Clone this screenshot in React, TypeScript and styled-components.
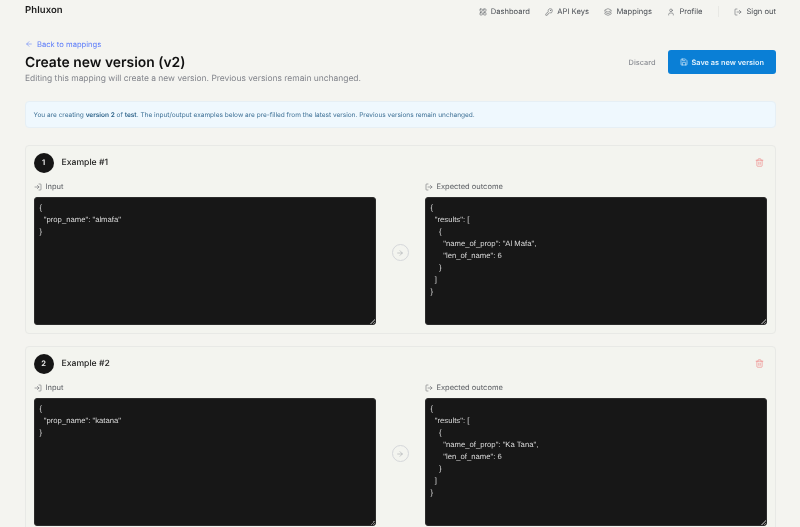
import * as React from "react";
import styled, { createGlobalStyle } from "styled-components";
import {
	ArrowLeft,
	ArrowRight,
	KeyRound,
	Layers,
	LayoutGrid,
	LogIn,
	LogOut,
	Save,
	Trash2,
	User,
} from "lucide-react";

const GlobalStyle = createGlobalStyle`
	html, body {
		margin: 0;
		height: 527px;
		overflow: hidden;
		background: #f4f4f0;
	}
	body {
		font-family: "Inter", "Liberation Sans", sans-serif;
		text-rendering: geometricPrecision;
	}
	textarea, button {
		text-rendering: geometricPrecision;
	}
`;

const Page = styled.div`
	width: 800px;
	height: 527px;
	overflow: hidden;
	background: #f4f4f0;
	color: #111;
	filter: blur(0.35px);
`;

const TopBar = styled.header`
	display: flex;
	align-items: center;
	justify-content: space-between;
	height: 21px;
	padding: 0 24px 0 25px;
`;

const Logo = styled.div`
	font-size: 9.5px;
	font-weight: 600;
	letter-spacing: 0.1px;
	color: #1a1a1a;
`;

const Nav = styled.nav`
	display: flex;
	align-items: center;
	gap: 15.5px;
	margin-top: 2px;
`;

const NavItem = styled.a`
	display: flex;
	align-items: center;
	gap: 4px;
	font-size: 7.6px;
	color: #4b4f55;
	white-space: nowrap;
`;

const NavDivider = styled.span`
	width: 1px;
	height: 11px;
	background: #e8e8e4;
`;

const Content = styled.main`
	padding: 18px 24px 0 25px;
`;

const Header = styled.div`
	display: flex;
	align-items: flex-start;
	justify-content: space-between;
`;

const BackLink = styled.a`
	display: flex;
	align-items: center;
	gap: 4px;
	height: 10px;
	font-size: 7.6px;
	color: #5c7cfa;
`;

const Title = styled.h1`
	margin: 5px 0 0;
	font-size: 13.9px;
	line-height: 19px;
	font-weight: 600;
	color: #111;
`;

const Subtitle = styled.p`
	margin: 1px 0 0;
	font-size: 8.45px;
	line-height: 11px;
	color: #80838a;
`;

const Actions = styled.div`
	display: flex;
	align-items: center;
	gap: 12px;
	margin-top: 11px;
`;

const DiscardButton = styled.button`
	padding: 0;
	border: 0;
	background: none;
	font: inherit;
	font-size: 7.4px;
	font-weight: 500;
	color: #8a8d93;
`;

const SaveButton = styled.button`
	display: flex;
	align-items: center;
	gap: 4px;
	height: 24px;
	padding: 0 12px;
	border: 0;
	border-radius: 3px;
	background: #0a7fd6;
	color: #dff0fc;
	font: inherit;
	font-size: 7.35px;
	font-weight: 600;
	white-space: nowrap;
`;

const Notice = styled.div`
	display: flex;
	align-items: center;
	height: 27px;
	margin-top: 16px;
	padding: 0 7.5px;
	box-sizing: border-box;
	border: 1px solid #e6eff5;
	border-radius: 4px;
	background: #eff8fe;
	font-size: 6.52px;
	color: #3f7196;

	b {
		font-weight: 600;
		color: #2c6289;
	}
`;

const Cards = styled.div`
	display: flex;
	flex-direction: column;
	gap: 12px;
	margin-top: 16.5px;
`;

const Card = styled.section`
	box-sizing: border-box;
	height: 189px;
	flex: none;
	padding: 7px 8.5px 7px 7.5px;
	border: 1px solid #e8e9e6;
	border-radius: 4px;
	background: #f3f4ef;
`;

const CardHead = styled.div`
	display: flex;
	align-items: center;
	justify-content: space-between;
	height: 20px;
`;

const CardTitle = styled.div`
	display: flex;
	align-items: center;
	gap: 8px;
	font-size: 8.65px;
	font-weight: 500;
	color: #1c1c1c;
`;

const StepNumber = styled.span`
	display: flex;
	align-items: center;
	justify-content: center;
	width: 20px;
	height: 20px;
	border-radius: 50%;
	background: #151515;
	color: #f2f2f2;
	font-size: 7.6px;
	font-weight: 600;
`;

const DeleteIcon = styled(Trash2)`
	margin-right: 3px;
	color: #f08080;
`;

const Columns = styled.div`
	display: grid;
	grid-template-columns: 342px 1fr 342px;
	margin-top: 8px;
`;

const Field = styled.div`
	display: flex;
	flex-direction: column;
	gap: 4px;
`;

const FieldLabel = styled.label`
	display: flex;
	align-items: center;
	gap: 4px;
	height: 12px;
	font-size: 7.5px;
	color: #5a5d62;
`;

const CodeArea = styled.textarea`
	display: block;
	box-sizing: border-box;
	width: 342px;
	height: 128px;
	padding: 4px 5px;
	border: 1px solid #2b2b2b;
	border-radius: 3px;
	outline: none;
	background: #171717;
	color: #dcdcdc;
	font-family: "Liberation Sans", "Inter", sans-serif;
	font-size: 7.7px;
	line-height: 12px;
	overflow: hidden;

	&::-webkit-resizer {
		background: linear-gradient(
				135deg,
				transparent 50%,
				#777 50%,
				#777 62%,
				transparent 62%,
				transparent 75%,
				#777 75%,
				#777 87%,
				transparent 87%
			)
			no-repeat right bottom / 5px 5px;
	}
`;

const ArrowColumn = styled.div`
	display: flex;
	align-items: center;
	justify-content: center;
`;

const ArrowCircle = styled.span`
	display: flex;
	align-items: center;
	justify-content: center;
	box-sizing: border-box;
	width: 17px;
	height: 17px;
	border: 1px solid #d5d7da;
	border-radius: 50%;
	color: #9ea2a8;
`;

const NAV_ITEMS = [
	{ label: "Dashboard", icon: LayoutGrid },
	{ label: "API Keys", icon: KeyRound },
	{ label: "Mappings", icon: Layers },
	{ label: "Profile", icon: User },
];

const EXAMPLES = [
	{ prop: "almafa", name: "Al Mafa" },
	{ prop: "katana", name: "Ka Tana" },
];

const inputJson = (prop: string) => `{\n  "prop_name": "${prop}"\n}`;

const outputJson = (name: string) =>
	`{\n  "results": [\n    {\n      "name_of_prop": "${name}",\n      "len_of_name": 6\n    }\n  ]\n}`;

const App = (): JSX.Element => (
	<Page>
		<GlobalStyle />
		<TopBar>
			<Logo>Phluxon</Logo>
			<Nav>
				{NAV_ITEMS.map(({ label, icon: Icon }) => (
					<NavItem key={label}>
						<Icon size={8} strokeWidth={1.5} />
						{label}
					</NavItem>
				))}
				<NavDivider />
				<NavItem>
					<LogOut size={8} strokeWidth={1.5} />
					Sign out
				</NavItem>
			</Nav>
		</TopBar>
		<Content>
			<Header>
				<div>
					<BackLink>
						<ArrowLeft size={8} strokeWidth={1.6} />
						Back to mappings
					</BackLink>
					<Title>Create new version (v2)</Title>
					<Subtitle>
						Editing this mapping will create a new version. Previous versions
						remain unchanged.
					</Subtitle>
				</div>
				<Actions>
					<DiscardButton type="button">Discard</DiscardButton>
					<SaveButton type="button">
						<Save size={8} strokeWidth={2} />
						Save as new version
					</SaveButton>
				</Actions>
			</Header>
			<Notice>
				<span>
					You are creating <b>version 2</b> of <b>test</b>. The input/output
					examples below are pre-filled from the latest version. Previous
					versions remain unchanged.
				</span>
			</Notice>
			<Cards>
				{EXAMPLES.map((example, index) => (
					<Card key={example.prop}>
						<CardHead>
							<CardTitle>
								<StepNumber>{index + 1}</StepNumber>
								Example #{index + 1}
							</CardTitle>
							<DeleteIcon size={9} strokeWidth={1.6} />
						</CardHead>
						<Columns>
							<Field>
								<FieldLabel>
									<LogIn size={8} strokeWidth={1.6} />
									Input
								</FieldLabel>
								<CodeArea readOnly defaultValue={inputJson(example.prop)} />
							</Field>
							<ArrowColumn>
								<ArrowCircle>
									<ArrowRight size={8} strokeWidth={1.6} />
								</ArrowCircle>
							</ArrowColumn>
							<Field>
								<FieldLabel>
									<LogOut size={8} strokeWidth={1.6} />
									Expected outcome
								</FieldLabel>
								<CodeArea readOnly defaultValue={outputJson(example.name)} />
							</Field>
						</Columns>
					</Card>
				))}
			</Cards>
		</Content>
	</Page>
);

export default App;
